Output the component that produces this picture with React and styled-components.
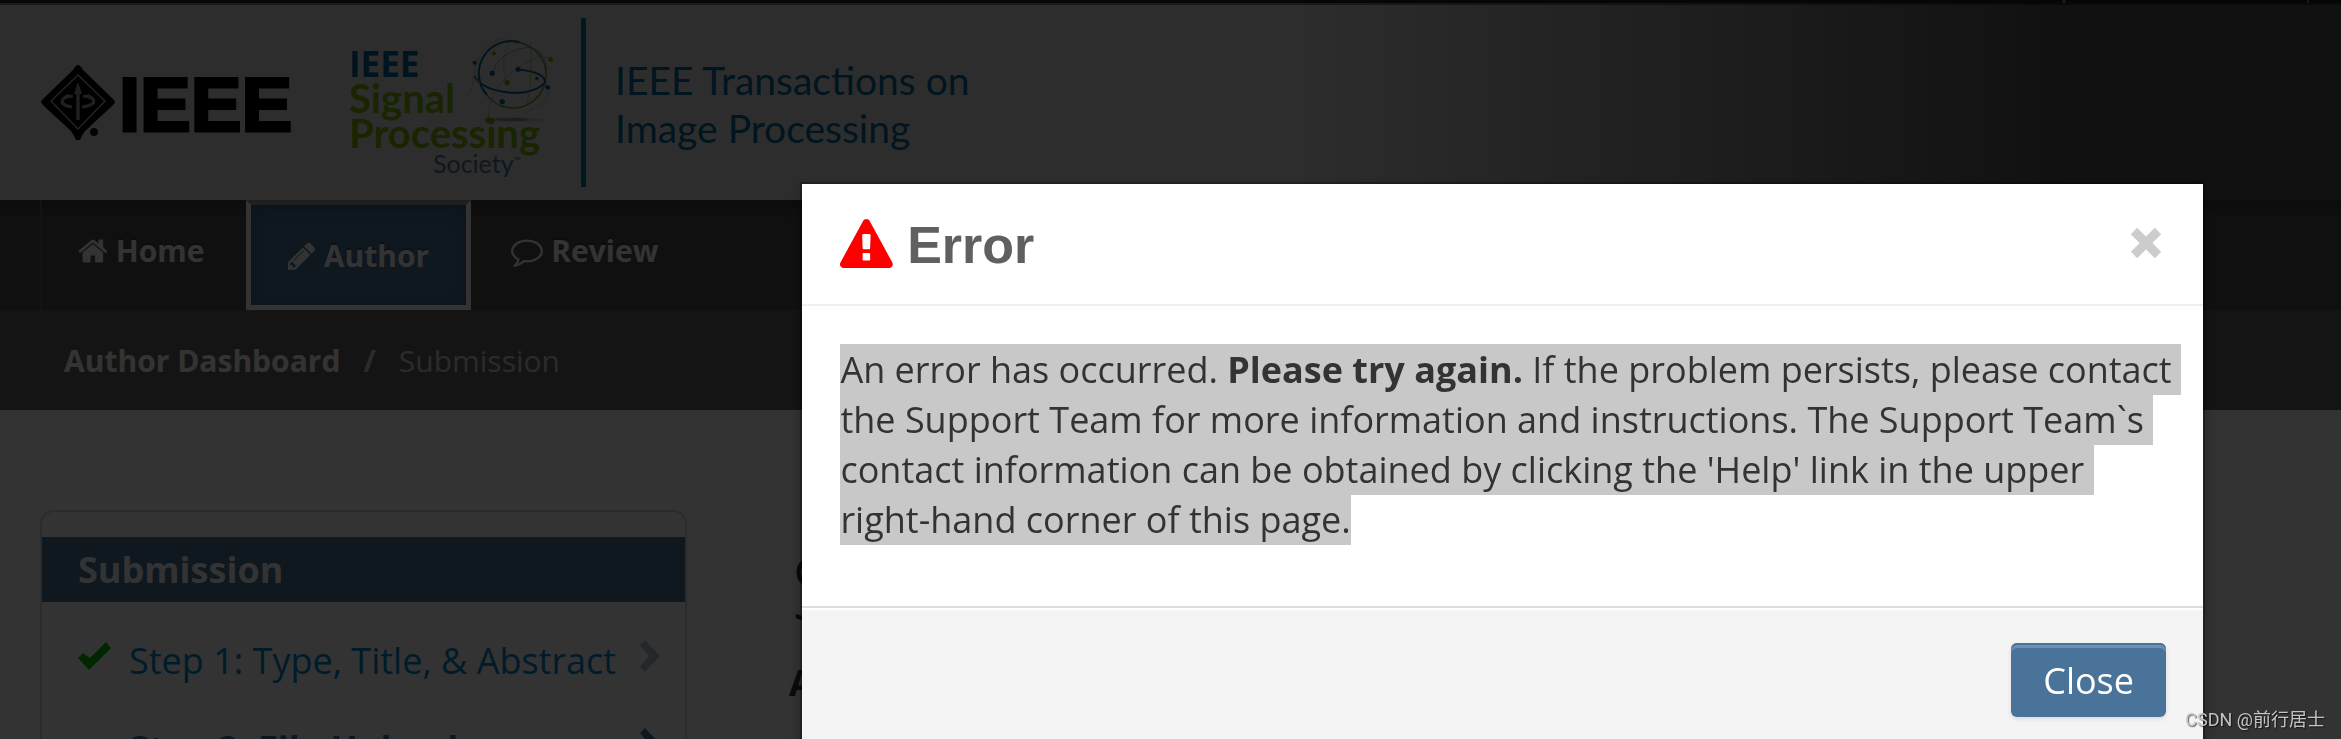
import React, { useState } from 'react'
import styled, { createGlobalStyle } from 'styled-components'

const ICONS = {
    home: {
        box: '64 0 1664 1792',
        d: 'M1472 992v480q0 26-19 45t-45 19h-384v-384h-256v384h-384q-26 0-45-19t-19-45v-480q0-1 .5-3t.5-3l575-474 575 474q1 2 1 6zm223-69l-62 74q-8 9-21 11h-3q-13 0-21-7l-692-577-692 577q-12 8-24 7-13-2-21-11l-62-74q-8-10-7-23.5t11-21.5l719-599q32-26 76-26t76 26l244 204v-195q0-14 9-23t23-9h192q14 0 23 9t9 23v408l219 182q10 8 11 21.5t-7 23.5z',
    },
    pencil: {
        box: '128 0 1536 1792',
        d: 'M491 1536l91-91-235-235-91 91v107h128v128h107zm523-928q0-22-22-22-10 0-17 7l-542 542q-7 7-7 17 0 22 22 22 10 0 17-7l542-542q7-7 7-17zm-54-192l416 416-832 832h-416v-416zm683 96q0 53-37 90l-166 166-416-416 166-165q36-38 90-38 53 0 91 38l235 234q37 39 37 91z',
    },
    comment: {
        box: '0 0 1792 1792',
        d: 'M896 384q-204 0-381.5 69.5t-282 187.5-104.5 255q0 112 71.5 213.5t201.5 175.5l87 50-27 96q-24 91-70 172 152-63 275-171l43-38 57 6q69 8 130 8 204 0 381.5-69.5t282-187.5 104.5-255-104.5-255-282-187.5-381.5-69.5zm896 512q0 174-120 321.5t-326 233-450 85.5q-70 0-145-8-198 175-460 242-49 14-114 22h-5q-15 0-27-10.5t-16-27.5v-1q-3-4-.5-12t2-10 4.5-9.5l6-9 7-8.5 8-9q7-8 31-34.5t34.5-38 31-39.5 32.5-51 27-59 26-76q-157-89-247.5-220t-90.5-281q0-174 120-321.5t326-233 450-85.5 450 85.5 326 233 120 321.5z',
    },
    warning: {
        box: '0 0 1792 1664',
        d: 'M1024 1375v-190q0-14-9.5-23.5t-22.5-9.5h-192q-13 0-22.5 9.5t-9.5 23.5v190q0 14 9.5 23.5t22.5 9.5h192q13 0 22.5-9.5t9.5-23.5zm-2-374l18-459q0-12-10-19-13-11-24-11h-220q-11 0-24 11-10 7-10 21l17 457q0 10 10 16.5t24 6.5h185q14 0 23.5-6.5t10.5-16.5zm-14-934l768 1408q35 63-2 126-17 29-46.5 46t-63.5 17h-1536q-34 0-63.5-17t-46.5-46q-37-63-2-126l768-1408q17-31 47-49t65-18 65 18 47 49z',
    },
}

function Icon({ name, height }) {
    const icon = ICONS[name]
    return (
        <svg height={height} viewBox={icon.box} fill="currentColor" aria-hidden="true">
            <path d={icon.d} />
        </svg>
    )
}

function DiamondMark() {
    return (
        <svg width="74" height="76" viewBox="0 0 74 76" aria-hidden="true">
            <path d="M37 0Q39 0 42 5L70 32Q74 36 74 37T70 42L44 66Q41 70 39 75H35Q33 70 30 66L4 42Q0 38 0 37T4 32L32 5Q35 0 37 0Z" fill="#000" />
            <path d="M37 10 64 36 37 64 10 36Z" fill="none" stroke="#aaa" strokeWidth="1.5" />
            <path d="M37 22V55" stroke="#999" strokeWidth="3.5" />
            <path d="M33 29l4-12 4 12z" fill="#999" />
            <path d="M32 31C18 32 17 40 31 42M42 31C56 32 57 40 41 42" stroke="#999" strokeWidth="3" fill="none" />
            <path d="M28 30q-9 4-6 9M46 30q9 4 6 9" stroke="#999" strokeWidth="3" fill="none" />
            <circle cx="53" cy="67" r="4" fill="#111" />
        </svg>
    )
}

function Globe() {
    return (
        <GlobeArt viewBox="365 15 280 270" fill="none" aria-hidden="true">
            <ellipse cx="517" cy="269" rx="95" ry="7" fill="#000" opacity=".12" />
            <ellipse cx="517" cy="269" rx="50" ry="5" fill="#000" opacity=".25" />
            <path d="M375 204Q400 175 402 135Q406 40 500 24M555 250Q618 225 630 172" stroke="#006699" strokeWidth="2" opacity=".4" />
            <path d="M440 195A98 98 0 0 1 540 36" stroke="#006699" strokeWidth="6" />
            <path d="M430 180A99 99 0 0 0 490 230" stroke="#006699" strokeWidth="4" opacity=".6" />
            <path d="M520 36A99 99 0 1 1 480 226" stroke="#5f8f10" strokeWidth="5" opacity=".8" />
            <path d="M402 138Q425 178 500 187T614 160Q622 128 535 118" stroke="#006699" strokeWidth="6" />
            <path d="M456 130Q470 75 540 56T620 120" stroke="#006699" strokeWidth="3" opacity=".5" />
            <path d="M500 158Q475 80 510 38M570 38Q580 130 560 228M445 268Q440 150 600 76L632 88" stroke="#78a800" strokeWidth="3" opacity=".5" />
            <path d="M402 138l16 20" stroke="#78a800" strokeWidth="6" />
            <g fill="#006699">
                <circle cx="403" cy="98" r="6" />
                <circle cx="456" cy="130" r="8" />
                <circle cx="534" cy="118" r="8" />
                <circle cx="623" cy="172" r="7" />
                <circle cx="486" cy="215" r="8" />
                <circle cx="590" cy="145" r="5" />
            </g>
            <g fill="#78a800">
                <circle cx="461" cy="70" r="6" />
                <circle cx="501" cy="158" r="8" />
                <circle cx="632" cy="88" r="7" />
                <circle cx="445" cy="271" r="9" />
            </g>
        </GlobeArt>
    )
}

function Chevron() {
    return (
        <svg width="20" height="32" viewBox="0 0 20 32" fill="currentColor" aria-hidden="true">
            <path d="M5 0 20 16 5 32 0 27 9 16 0 5Z" />
        </svg>
    )
}

function Check() {
    return (
        <svg width="33" height="28" viewBox="0 0 33 28" aria-hidden="true">
            <path d="M0 16 5 11 12 16 28 0 33 6 11 28Z" fill="#00c400" />
        </svg>
    )
}

function ErrorDialog({ onClose }) {
    return (
        <Backdrop>
            <Dialog role="dialog" aria-modal="true" aria-labelledby="error-title">
                <DialogHeader>
                    <Icon name="warning" height={49} />
                    <h3 id="error-title">Error</h3>
                    <DismissButton type="button" aria-label="Dismiss" onClick={onClose}>
                        <svg width="32" height="32" viewBox="0 0 32 32" aria-hidden="true">
                            <path d="M4 4 28 28M28 4 4 28" stroke="#ccc" strokeWidth="9" />
                        </svg>
                    </DismissButton>
                </DialogHeader>
                <DialogBody>
                    <Selected>
                        An error has occurred. <b>Please try again.</b> If the problem persists, please contact the Support Team for more information and instructions. The Support Team`s contact information can be obtained by clicking the 'Help' link in the upper <NoBreak>right-hand</NoBreak> corner of this page.
                    </Selected>
                </DialogBody>
                <DialogFooter>
                    <CloseButton type="button" onClick={onClose}>Close</CloseButton>
                </DialogFooter>
            </Dialog>
        </Backdrop>
    )
}

function App() {
    const [open, setOpen] = useState(true);
    return (
        <Page>
            <GlobalStyle />
            <TopStrip>
                <Tab />
                <TabEnd />
            </TopStrip>
            <Header>
                <DiamondMark />
                <Ieee>IEEE</Ieee>
                <Society>
                    <strong>IEEE</strong>
                    <span>Signal</span>
                    <span>Processing</span>
                    <small>Society<sup>™</sup></small>
                    <Globe />
                </Society>
                <Journal>IEEE Transactions on<br />Image Processing</Journal>
            </Header>
            <Nav>
                <NavLink href="#"><Icon name="home" height={32} />Home</NavLink>
                <NavLink href="#" $active><Icon name="pencil" height={32} />Author</NavLink>
                <NavLink href="#"><Icon name="comment" height={32} />Review</NavLink>
            </Nav>
            <Breadcrumb>
                <a href="#">Author Dashboard</a>
                <b>/</b>
                <span>Submission</span>
            </Breadcrumb>
            <Main>
                <Card>
                    <h2>Submission</h2>
                    <Step href="#">
                        <Check />
                        <span>Step 1: Type, Title, &amp; Abstract</span>
                        <Chevron />
                    </Step>
                    <Step href="#" $current>
                        <i />
                        <span>Step 2: File Upload</span>
                        <Chevron />
                    </Step>
                </Card>
                <Content>
                    <h1>S</h1>
                    <b>A</b>
                </Content>
            </Main>
            {open && <ErrorDialog onClose={() => setOpen(false)} />}
            <Watermark>CSDN @前行居士</Watermark>
        </Page>
    )
}

const GlobalStyle = createGlobalStyle`
    *{
        box-sizing:border-box;
    }
    body{
        margin:0;
        background:#fff;
        color:#333;
        font-family:"Open Sans", "Noto Sans", sans-serif;
        font-size:36px;
        line-height:50px;
    }
    a{
        text-decoration:none;
    }
`

const Page = styled.div`
    height:100vh;
    overflow:hidden;
`

const TopStrip = styled.div`
    display:flex;
    justify-content:flex-end;
    height:3px;
    background:#222;
`

const Tab = styled.div`
    width:245px;
    border-left:4px solid #777;
`

const TabEnd = styled.div`
    width:34px;
    border-left:2px solid #777;
`

const Header = styled.header`
    display:flex;
    align-items:center;
    height:197px;
    padding-left:41px;
    border-top:2px solid rgba(0,0,0,0.4);
    background:linear-gradient(to right, #e1e1e1 55%, #555 88%);
`

const Ieee = styled.div`
    margin:4px 0 0 4px;
    width:230px;
    color:#000;
    -webkit-text-stroke:3px #000;
    font:bold 76px/80px "Liberation Sans", sans-serif;
`

const Society = styled.div`
    position:relative;
    display:flex;
    flex-direction:column;
    width:232px;
    padding-top:16px;
    color:#78b800;
    font:bold 40px/35px Lato, sans-serif;
    strong{
        color:#006699;
        font:bold 35px/34px "Open Sans", sans-serif;
    }
    small{
        padding-left:84px;
        color:#46789c;
        font:25px/24px Lato, sans-serif;
    }
    sup{
        font-size:10px;
        line-height:10px;
    }
`

const GlobeArt = styled.svg`
    position:absolute;
    top:4px;
    left:113px;
    width:93px;
    height:90px;
`

const Journal = styled.div`
    padding:38px 0 35px 29px;
    border-left:5px solid #0078a8;
    color:#006c9e;
    font:39px/48px Lato, sans-serif;
`

const Nav = styled.nav`
    display:flex;
    height:110px;
    padding-left:40px;
    background:linear-gradient(#3c3c3c, #525252 20px, #525252);
`

const NavLink = styled.a`
    display:flex;
    align-items:center;
    gap:8px;
    padding:0 38px 8px;
    border-left:2px solid transparent;
    color:#fff;
    font-size:30px;
    font-weight:bold;
    text-shadow:0 -2px 0 rgba(0,0,0,0.25);
    &:first-child{
        padding:0 42px 8px 36px;
        border-color:#5e5e5e;
    }
    ${({ $active }) => $active && `
        padding:2px 37px 0;
        border:5px solid #fff;
        border-top-color:#999;
        background:#4a739a;
        box-shadow:inset 0 4px 16px rgba(0,0,0,0.15);
    `}
`

const Breadcrumb = styled.div`
    display:flex;
    align-items:center;
    gap:23px;
    height:100px;
    padding:2px 0 0 64px;
    background:#666;
    color:#d6d6dd;
    font-size:30px;
    a{
        color:#fff;
        font-weight:bold;
    }
`

const Main = styled.main`
    display:flex;
    align-items:flex-start;
    gap:102px;
    padding:100px 40px 0;
`

const Card = styled.section`
    flex:none;
    width:29%;
    max-width:647px;
    height:400px;
    padding-top:25px;
    border:2px solid #d8d8d8;
    border-radius:14px;
    h2{
        margin:0 0 34px;
        padding-left:36px;
        background:#4a739a;
        color:#fff;
        font-size:36px;
        line-height:65px;
    }
`

const Step = styled.a`
    display:flex;
    align-items:flex-start;
    margin-bottom:38px;
    padding:0 25px 0 36px;
    color:${({ $current }) => $current ? '#4a739a' : '#0088cc'};
    font-weight:${({ $current }) => $current ? 'bold' : 'normal'};
    > :first-child{
        flex:none;
        width:33px;
        margin:6px 18px 0 0;
    }
    span{
        flex:1;
        white-space:nowrap;
    }
    > svg:last-child{
        margin-top:4px;
        color:${({ $current }) => $current ? '#4a739a' : '#b4c8d4'};
    }
`

const Content = styled.section`
    h1{
        margin:26px 0 22px;
        padding-left:2px;
        font-size:88px;
        font-weight:300;
        line-height:100px;
    }
`

const Backdrop = styled.div`
    position:fixed;
    inset:0;
    display:flex;
    align-items:flex-start;
    justify-content:flex-end;
    padding:182px 136px 0 0;
    background:rgba(0,0,0,0.8);
`

const Dialog = styled.div`
    width:60vw;
    border:2px solid rgba(0,0,0,0.3);
    background:#fff;
    background-clip:padding-box;
    box-shadow:0 6px 14px rgba(0,0,0,0.3);
`

const DialogHeader = styled.div`
    display:flex;
    align-items:center;
    height:122px;
    padding:0 41px 2px 38px;
    border-bottom:2px solid #eee;
    color:#f00;
    h3{
        flex:1;
        margin:4px 0 0 14px;
        color:#606060;
        font:bold 52px/80px "Liberation Sans", sans-serif;
    }
`

const DismissButton = styled.button`
    display:flex;
    padding:0;
    border:0;
    background:none;
    cursor:pointer;
`

const DialogBody = styled.div`
    padding:39px 16px 61px 38px;
    white-space:break-spaces;
`

const Selected = styled.mark`
    padding:1px 0;
    background:#c8c8c8;
    color:#333;
`

const NoBreak = styled.span`
    white-space:nowrap;
`

const DialogFooter = styled.div`
    display:flex;
    justify-content:flex-end;
    padding:35px 37px 30px;
    border-top:2px solid #ddd;
    background:#f4f4f4;
    box-shadow:inset 0 2px 0 #fff;
`

const CloseButton = styled.button`
    padding:13px 32px 11px;
    border:0;
    border-radius:6px;
    background:#4a739a;
    box-shadow:inset 0 2px 0 #4a739a, inset 0 5px 0 rgba(255,255,255,0.2), 0 2px 4px rgba(0,0,0,0.1);
    color:#fff;
    font:inherit;
    cursor:pointer;
`

const Watermark = styled.div`
    position:fixed;
    right:16px;
    bottom:6px;
    color:#c4c4c4;
    font:18px/26px Roboto, "Noto Sans CJK SC", sans-serif;
    text-shadow:1px 1px 1px rgba(0,0,0,0.6);
`

export default App
